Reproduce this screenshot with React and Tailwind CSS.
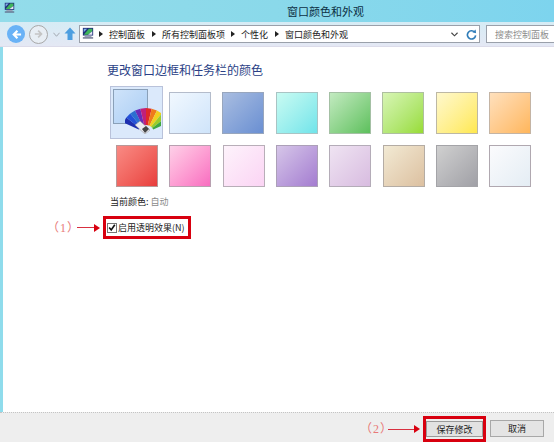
const font = { fontFamily: '"Noto Sans CJK SC", "Noto Sans", sans-serif' };

function CpIcon({ className }) {
  return (
    <svg viewBox="0 0 14 14" className={className}>
      <rect x="1" y="1" width="12" height="9" fill="#1f2f7a" />
      <path d="M2 9 L8 2 L12 2 L12 5 L7 9 Z" fill="#3fb55a" />
      <path d="M7 9 L12 5 L12 9 Z" fill="#e8e8f4" />
      <path d="M2 2 L6 2 L2 6 Z" fill="#7fb0e8" />
      <rect x="3" y="10" width="8" height="2" fill="#9aa2b8" />
      <rect x="1" y="12" width="12" height="1.5" fill="#5c6280" />
    </svg>
  );
}

function Fan() {
  const colors = ["#1d2fb0", "#2451d8", "#2b6fd0", "#6a2bb8", "#c0207a", "#e02828", "#ef7a1a", "#f2cf1f", "#9ccc2a", "#3fa83f"];
  return (
    <svg viewBox="0 0 36 36" className="w-[36px] h-[36px]">
      {colors.map((c, i) => {
        const a0 = (-155 + i * 13) * Math.PI / 180;
        const a1 = (-155 + (i + 1) * 13) * Math.PI / 180;
        const cx = 21, cy = 35, r = 25, r2 = 8;
        const d = `M${cx + r2 * Math.cos(a0)} ${cy + r2 * Math.sin(a0)} L${cx + r * Math.cos(a0)} ${cy + r * Math.sin(a0)} L${cx + r * Math.cos(a1)} ${cy + r * Math.sin(a1)} L${cx + r2 * Math.cos(a1)} ${cy + r2 * Math.sin(a1)} Z`;
        return <path key={c} d={d} fill={c} />;
      })}
      <path d="M10 27 L15 23 L25 32 L20 36 Z" fill="#ececf2" stroke="#888" strokeWidth="0.5" />
      <path d="M17 31 L21 28 L24 31 L20 35 Z" fill="#444" />
    </svg>
  );
}

const row1 = [
  "border-[#b4bccb] from-[#f1f8ff] to-[#cfe4fa]",
  "border-[#98a6bd] from-[#a9bde0] to-[#6a8fd2]",
  "border-[#a9c4c4] from-[#c8fbf2] to-[#6fe4ea]",
  "border-[#a4c0a4] from-[#c2eac0] to-[#5cc05c]",
  "border-[#aebfa0] from-[#d8f5b4] to-[#98dc30]",
  "border-[#bdb8a4] from-[#fff8cc] to-[#ffe84a]",
  "border-[#c4b4a4] from-[#ffe0bc] to-[#ffb65a]",
];
const row2 = [
  "border-[#b89898] from-[#f98a84] to-[#e83c3c]",
  "border-[#b8a0b0] from-[#fdd0e8] to-[#f86cc0]",
  "border-[#b8aeb8] from-[#fdf3fb] to-[#fbd4f4]",
  "border-[#aca0b8] from-[#d6c6e8] to-[#a47cd0]",
  "border-[#b4acb8] from-[#efe4f2] to-[#d8bce0]",
  "border-[#b4aca4] from-[#f2ead4] to-[#dcc0a0]",
  "border-[#a4a4a8] from-[#d0d0d0] to-[#a0a0a6]",
  "border-[#b0a8b0] from-[#fbfbfd] to-[#e4edf4]",
];

function Swatch({ c }) {
  return <div className={`w-[42px] h-[42px] border-[1.5px] bg-gradient-to-br ${c}`} />;
}

export default function App() {
  return (
    <div style={font} className="relative w-[554px] h-[442px] overflow-hidden flex flex-col bg-white text-[9px] leading-none text-[#222]">
      {/* title bar */}
      <div className="h-[22px] shrink-0 flex items-center pl-[4px] bg-gradient-to-r from-[#93dcea] via-[#8ad9ea] to-[#7dd4ee]">
        <CpIcon className="w-[11px] h-[11px] -mt-[8px]" />
        <div className="w-[272px]" />
        <span className="text-[11px] text-[#0c3044]">窗口颜色和外观</span>
      </div>

      {/* toolbar */}
      <div className="h-[25px] shrink-0 flex items-center bg-gradient-to-b from-[#d6ecf5] to-[#e4e8f4] border-b border-[#dcdcea] pl-[7px]">
        <div className="w-[18px] h-[18px] rounded-full bg-[#69b2f6] flex items-center justify-center">
          <svg viewBox="0 0 12 12" className="w-[11px] h-[11px]"><path d="M7 2 L3 6 L7 10 M3 6 H11" stroke="#fff" strokeWidth="2.4" fill="none" /></svg>
        </div>
        <div className="w-[19px] h-[19px] ml-[4px] rounded-full border border-[#a8a8a8] flex items-center justify-center bg-[#e8eef4]">
          <svg viewBox="0 0 12 12" className="w-[10px] h-[10px]"><path d="M5 2 L9 6 L5 10 M9 6 H1" stroke="#c4c4c4" strokeWidth="2" fill="none" /></svg>
        </div>
        <svg viewBox="0 0 8 5" className="w-[7px] h-[5px] ml-[5px]"><path d="M0.5 0.5 L4 4.5 L7.5 0.5" stroke="#9aa0a8" strokeWidth="1" fill="none" /></svg>
        <svg viewBox="0 0 12 14" className="w-[12px] h-[14px] ml-[4px]"><path d="M6 0.5 L11.5 6.5 H8.5 V13 H3.5 V6.5 H0.5 Z" fill="#4c9ee0" /></svg>
        <div className="ml-[3px] w-[401px] h-[18px] flex items-center border border-[#9aa0aa] bg-white pl-[2px]">
          <CpIcon className="w-[12px] h-[12px] -mt-[3px]" />
          <Arrow className="ml-[5px]" />
          <span className="ml-[6px]">控制面板</span>
          <Arrow className="ml-[7px]" />
          <span className="ml-[6px]">所有控制面板项</span>
          <Arrow className="ml-[6px]" />
          <span className="ml-[6px]">个性化</span>
          <Arrow className="ml-[7px]" />
          <span className="ml-[6px]">窗口颜色和外观</span>
          <svg viewBox="0 0 8 5" className="w-[7px] h-[5px] ml-[103px]"><path d="M0.5 0.5 L4 4 L7.5 0.5" stroke="#444" strokeWidth="1.3" fill="none" /></svg>
          <svg viewBox="0 0 12 12" className="w-[11px] h-[11px] ml-[8px]"><path d="M9.5 3.5 A4.5 4.5 0 1 0 10.5 7" stroke="#2f7cb8" strokeWidth="1.8" fill="none" /><path d="M7 3.5 L11 4.5 L10.5 0.5 Z" fill="#2f7cb8" /></svg>
        </div>
        <div className="ml-[6px] flex-1 h-[18px] flex items-center border border-[#9aa0aa] border-r-0 bg-white pl-[8px] text-[#8c8c8c] whitespace-nowrap overflow-hidden">
          搜索控制面板
        </div>
      </div>

      {/* content */}
      <div className="flex-1 flex flex-col border-l-[3px] border-[#8fdcec] pl-[104px] pt-[17px]">
        <h1 className="text-[12px] leading-[12px] font-normal text-[#2a3f86]">更改窗口边框和任务栏的颜色</h1>
        <div className="mt-[10px] flex items-center h-[53px] ml-[3px]">
          <div className="relative w-[53px] h-[53px] border border-[#b9c2da] bg-[#dbe9fb] p-[2px]">
            <div className="w-[35px] h-[35px] border border-[#8aa0b8] bg-gradient-to-br from-[#cfe3fa] to-[#a9cdf4]" />
            <div className="absolute right-[1px] bottom-[4px]"><Fan /></div>
          </div>
          <div className="flex gap-[11.33px] ml-[6px]">
            {row1.map((c) => <Swatch key={c} c={c} />)}
          </div>
        </div>
        <div className="mt-[6px] flex gap-[11.33px] ml-[9px]">
          {row2.map((c) => <Swatch key={c} c={c} />)}
        </div>
        <div className="mt-[10px] ml-[3px] text-[9px] leading-[10px]">
          当前颜色: <span className="text-[#8a8a8a]">自动</span>
        </div>
        <div className="relative mt-[9px] -ml-[4px] w-[88px] h-[23px] border-[3px] border-[#d8000f] flex items-center pl-[1px]">
          <span className="w-[10px] h-[10px] border border-[#777] bg-white flex items-center justify-center shrink-0">
            <svg viewBox="0 0 10 10" className="w-[9px] h-[9px]"><path d="M1.5 5 L4 8 L8.5 1.5" stroke="#111" strokeWidth="2" fill="none" /></svg>
          </span>
          <span className="ml-[1px] text-[9px] whitespace-nowrap">启用透明效果(N)</span>
          <Callout className="right-[88px]" label="（1）" line="w-[17px] -ml-[3px]" />
        </div>
      </div>

      {/* footer */}
      <div className="h-[30px] shrink-0 bg-[#eeeeee] border-t border-dotted border-[#c4c4c4] flex items-center justify-end pr-[10px]">
        <div className="relative w-[63px] h-[26px] mt-[3px] border-[3px] border-[#d8000f] flex items-center justify-center">
          <div className="w-[57px] h-[16px] border border-[#9a9a9a] bg-[#e2e2e2] flex items-center justify-center">保存修改</div>
          <Callout className="right-[63px]" label="（2）" line="w-[26px] -ml-[5px]" />
        </div>
        <div className="ml-[4px] w-[54px] h-[17px] mt-[1px] border border-[#a8a8a8] bg-[#e4e4e4] flex items-center justify-center">取消</div>
      </div>
    </div>
  );
}

function Arrow({ className }) {
  return <svg viewBox="0 0 4 6" className={`w-[4px] h-[6px] shrink-0 ${className}`}><path d="M0 0 L4 3 L0 6 Z" fill="#222" /></svg>;
}

function Callout({ className, label, line }) {
  return (
    <div className={`absolute top-1/2 -translate-y-1/2 flex items-center whitespace-nowrap ${className}`}>
      <span style={{ fontFamily: '"Liberation Serif", "Noto Sans CJK SC", serif' }} className="text-[12px] tracking-[1px] text-[#e87878]">{label}</span>
      <span className={`h-[1px] bg-[#d83040] ${line}`} />
      <svg viewBox="0 0 6 8" className="w-[6px] h-[8px] shrink-0"><path d="M0 0 L6 4 L0 8 Z" fill="#d8000f" /></svg>
    </div>
  );
}
